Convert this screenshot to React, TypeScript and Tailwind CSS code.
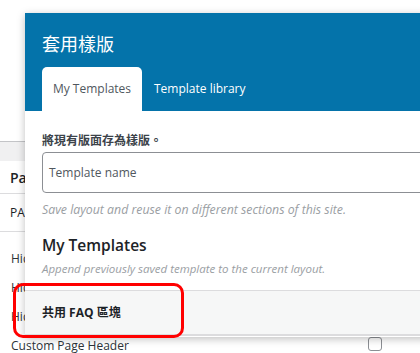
const font = "font-['Open_Sans','Noto_Sans_CJK_TC',sans-serif]";

const BackgroundRow = ({ label, check }: { label: string; check?: boolean }) => (
  <div className="flex h-[29px] items-center justify-between pl-[11px] pr-[38px] text-[12px] text-[#2c3338]">
    <span>{label}</span>
    {check && <span className="mb-[3px] block h-[14px] w-[14px] rounded-[3px] border border-[#8c8f94] bg-white" />}
  </div>
);

const App = () => {
  return (
    <div className={`relative h-[353px] w-[420px] overflow-hidden bg-white ${font}`}>
      {/* page behind the dialog */}
      <div className="h-[3px] overflow-hidden">
        <p className="-mt-[13px] pl-[277px] text-[13px] leading-[16px] whitespace-nowrap text-[#1d2327]">
          This is far below the reach of most people
        </p>
      </div>
      <div className="mt-[138px] border-t border-[#c3c4c7]">
        <div className="h-[19px] bg-[#f0f0f1]" />
        <div className="flex h-[33px] items-center border-b border-[#dcdcde] pl-[10px] text-[14px] font-semibold text-[#1d2327]">
          Page Settings
        </div>
        <div className="flex h-[38px] items-center border-b border-[#dcdcde] pl-[10px] text-[12px] text-[#1d2327]">
          PAGE OPTIONS
        </div>
        <div className="pt-[12px]">
          <BackgroundRow label="Hide Title" />
          <BackgroundRow label="Hide Header" />
          <BackgroundRow label="Hide Footer" />
          <BackgroundRow label="Custom Page Header" check />
        </div>
      </div>

      {/* dialog */}
      <div className="absolute left-[25px] top-[13px] flex h-[324px] w-[430px] flex-col bg-white shadow-[0_2px_8px_rgba(0,0,0,0.25)]">
        <div className="flex h-[98px] flex-col bg-[#0473aa] pl-[17px]">
          <h2 className="mt-[19px] text-[18px] leading-[24px] text-white">套用樣版</h2>
          <div className="mt-[11px] flex h-[44px] items-center">
            <div className="flex h-full w-[100px] items-center justify-center rounded-t-[5px] bg-white text-[12px] text-[#50575e]">
              My Templates
            </div>
            <div className="ml-[12px] text-[12px] font-medium text-white">Template library</div>
          </div>
        </div>
        <div className="flex flex-col pl-[17px]">
          <p className="mt-[21px] text-[12px] leading-[18px] font-bold text-[#3c434a]">將現有版面存為樣版。</p>
          <div className="mt-[2px] flex h-[41px] w-[400px] items-center rounded-[4px] border border-[#8c8f94] pl-[6px] text-[12px] text-[#50575e]">
            Template name
          </div>
          <p className="mt-[8px] text-[12.3px] leading-[18px] italic text-[#9a9ea3]">
            Save layout and reuse it on different sections of this site.
          </p>
          <h3 className="mt-[14px] text-[15.5px] leading-[24px] font-semibold text-[#1d2327]">My Templates</h3>
          <p className="mt-[3px] text-[11.5px] leading-[18px] italic text-[#9a9ea3]">
            Append previously saved template to the current layout.
          </p>
        </div>
        <div className="mt-[12px] flex h-[46px] items-center border-t border-b-2 border-t-[#dcdcde] border-b-[#dcdcde] bg-[#f6f7f7] pl-[17px] text-[12px] font-bold text-[#1d2327]">
          共用 FAQ 區塊
        </div>
      </div>

      {/* annotation */}
      <div className="absolute left-[13px] top-[283px] h-[55px] w-[171px] rounded-[10px] border-[3px] border-[#ff0000]" />
    </div>
  );
};

export default App;
